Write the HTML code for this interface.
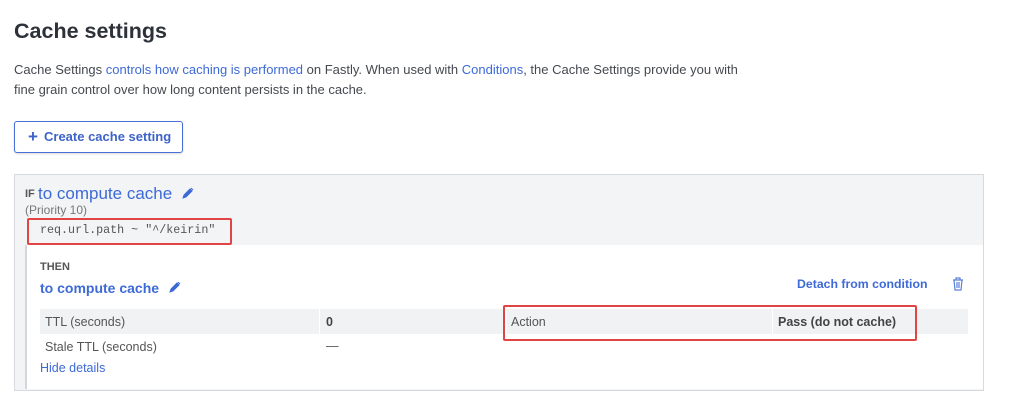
<!DOCTYPE html><html><head><style>
body{margin:0;width:1024px;height:416px;background:#fff;font-family:"Liberation Sans",sans-serif;color:#3a3f45;position:relative;overflow:hidden}
.a{position:absolute;white-space:nowrap}
.blue{color:#3d6ad6}
</style></head><body>
<div class="a" style="left:14px;top:19px;font-size:21.5px;font-weight:bold;color:#2d3239">Cache settings</div>
<div class="a" style="left:14px;top:60px;font-size:13px;line-height:20px;color:#44494f">Cache Settings <span class="blue">controls how caching is performed</span> on Fastly. When used with <span class="blue">Conditions</span>, the Cache Settings provide you with<br>fine grain control over how long content persists in the cache.</div>
<div class="a" style="left:14px;top:121px;width:167px;height:30px;border:1px solid #4a6fd6;border-radius:3px;box-shadow:0 1px 2px rgba(0,0,0,.15);font-size:13px;font-weight:bold;color:#3d63c9;line-height:30px"><span style="position:absolute;left:13px;font-size:17px">+</span><span style="position:absolute;left:29px">Create cache setting</span></div>
<div class="a" style="left:14px;top:174px;width:968px;height:215px;border:1px solid #d6d9de;background:#f3f4f6"></div>
<div class="a" style="left:25px;top:245px;width:956px;height:144px;background:#fff;border-left:2px solid #d3d6db"></div>
<div class="a" style="left:25px;top:188px;font-size:11px;font-weight:bold;color:#555">IF</div>
<div class="a blue" style="left:38px;top:184px;font-size:17px">to compute cache</div>
<svg class="a" style="left:182px;top:187px" width="12" height="12" viewBox="0 0 12 12"><path d="M1 11l1-3 6-6 2 2-6 6z M9 1l2 2" fill="#3d6ad6" stroke="#3d6ad6"/></svg>
<div class="a" style="left:25px;top:203px;font-size:12px;color:#777">(Priority 10)</div>
<div class="a" style="left:27px;top:218px;width:201px;height:23px;border:2px solid #e04444;border-radius:2px"></div>
<div class="a" style="left:40px;top:223px;font-family:'Liberation Mono',monospace;font-size:11.7px;color:#555">req.url.path ~ "^/keirin"</div>
<div class="a" style="left:40px;top:261px;font-size:11px;font-weight:bold;color:#555">THEN</div>
<div class="a blue" style="left:40px;top:280px;font-size:14px;font-weight:bold">to compute cache</div>
<svg class="a" style="left:169px;top:281px" width="12" height="12" viewBox="0 0 12 12"><path d="M1 11l1-3 6-6 2 2-6 6z M9 1l2 2" fill="#3d6ad6" stroke="#3d6ad6"/></svg>
<div class="a blue" style="left:797px;top:277px;font-size:12.3px;font-weight:bold">Detach from condition</div>
<svg class="a" style="left:952px;top:277px" width="12" height="14" viewBox="0 0 12 14"><path d="M1 3h10M4 3V1h4v2M2 3l1 10h6l1-10M5 5v6M7 5v6" fill="none" stroke="#5b7fdc" stroke-width="1.2"/></svg>
<div class="a" style="left:40px;top:309px;width:279px;height:25px;background:#f1f2f4"></div>
<div class="a" style="left:320px;top:309px;width:185px;height:25px;background:#f1f2f4"></div>
<div class="a" style="left:507px;top:309px;width:265px;height:25px;background:#f1f2f4"></div>
<div class="a" style="left:773px;top:309px;width:195px;height:25px;background:#f1f2f4"></div>
<div class="a" style="left:503px;top:305px;width:410px;height:32px;border:2px solid #e04444;border-radius:2px"></div>
<div class="a" style="left:45px;top:315px;font-size:12.5px;color:#555">TTL (seconds)</div>
<div class="a" style="left:326px;top:315px;font-size:12.5px;font-weight:bold;color:#444">0</div>
<div class="a" style="left:511px;top:315px;font-size:12.5px;color:#555">Action</div>
<div class="a" style="left:778px;top:315px;font-size:12.5px;font-weight:bold;color:#444">Pass (do not cache)</div>
<div class="a" style="left:45px;top:340px;font-size:12.5px;color:#555">Stale TTL (seconds)</div>
<div class="a" style="left:326px;top:339px;font-size:12.5px;color:#555">—</div>
<div class="a blue" style="left:40px;top:361px;font-size:12.5px">Hide details</div>
</body></html>
